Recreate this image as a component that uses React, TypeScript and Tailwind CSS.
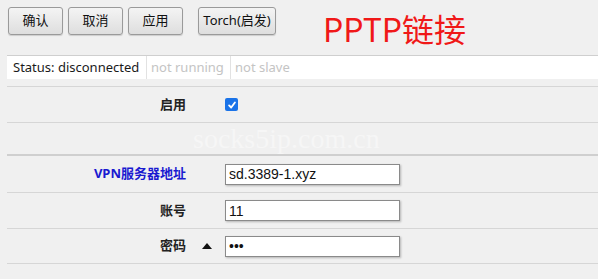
import React from 'react'

const btn =
  'h-[28px] rounded-[3px] border border-[#9a9a9a] bg-gradient-to-b from-[#f4f4f4] to-[#dedede] text-[13px] text-[#111] shadow-[0_1px_1px_rgba(0,0,0,0.15)]'

function Row({
  label,
  blue,
  height,
  children,
  extra,
}: {
  label?: string
  blue?: boolean
  height: string
  children?: React.ReactNode
  extra?: React.ReactNode
}) {
  return (
    <div className={`flex items-center border-b border-[#d6d6d6] ${height}`}>
      <div
        className={`w-[179px] shrink-0 text-right text-[13px] font-bold ${
          blue ? 'text-[#1a1ad0]' : 'text-[#222]'
        }`}
      >
        {label}
      </div>
      <div className="w-[39px] shrink-0 flex items-center justify-center pl-[2px]">{extra}</div>
      {children}
    </div>
  )
}

function Field({ value }: { value: string }) {
  return (
    <div className="w-[175px] h-[21px] border border-[#8a8a8a] bg-white shadow-[1px_1px_2px_rgba(0,0,0,0.25)] flex items-center pl-[3px] text-[14px] text-[#111] font-['Liberation_Sans',Arial,sans-serif] leading-none">
      {value}
    </div>
  )
}

export default function App() {
  return (
    <div className="relative w-[598px] h-[279px] overflow-hidden bg-[#f0f0f0] font-['Noto_Sans','Noto_Sans_CJK_SC',sans-serif]">
      {/* Toolbar */}
      <div className="flex items-start pl-[8px] pt-[7px] h-[55px]">
        <div className="flex gap-[5px]">
          <button className={`${btn} w-[55px]`}>确认</button>
          <button className={`${btn} w-[55px]`}>取消</button>
          <button className={`${btn} w-[55px]`}>应用</button>
        </div>
        <button className={`${btn} w-[78px] ml-[15px]`}>Torch(启发)</button>
        <div className="ml-[47px] mt-[3px] text-[32px] leading-[36px] text-[#f01818] font-['Noto_Sans_CJK_SC',sans-serif]">
          PPTP链接
        </div>
      </div>

      {/* Status tabs */}
      <div className="ml-[7px] flex h-[24px] border-t border-[#cfcfcf] bg-white text-[13px] leading-none">
        <div className="w-[140px] flex items-center pl-[6px] border-r border-[#e2e2e2] text-[#1a1a1a]">
          Status: disconnected
        </div>
        <div className="w-[84px] flex items-center pl-[4px] border-r border-[#e2e2e2] text-[#c4c4c4]">
          not running
        </div>
        <div className="w-[70px] flex items-center pl-[4px] text-[#c4c4c4]">not slave</div>
      </div>

      {/* Form rows */}
      <div className="ml-[7px] mt-[7px] border-t border-[#d6d6d6]">
        <Row label="启用" height="h-[36px]">
          <span className="w-[13px] h-[13px] rounded-[2px] bg-[#1a73e8] flex items-center justify-center">
            <svg width="10" height="10" viewBox="0 0 12 12" fill="none" stroke="white" strokeWidth="2.2" strokeLinecap="round" strokeLinejoin="round">
              <polyline points="2.5 6.5 5 9 9.5 3" />
            </svg>
          </span>
        </Row>
        <div className="h-[33px] border-b-2 border-[#cfcfcf]" />
        <Row label="VPN服务器地址" blue height="h-[37px]">
          <Field value="sd.3389-1.xyz" />
        </Row>
        <Row label="账号" height="h-[36px]">
          <Field value="11" />
        </Row>
        <Row
          label="密码"
          height="h-[35px]"
          extra={
            <svg width="10" height="6" viewBox="0 0 10 6">
              <polygon points="5 0 10 6 0 6" fill="#111" />
            </svg>
          }
        >
          <Field value="•••" />
        </Row>
      </div>

      {/* Watermark */}
      <div className="absolute left-[193px] top-[118px] text-[28px] text-[#f6f6f6] font-['Liberation_Serif',serif] pointer-events-none select-none">
        socks5ip.com.cn
      </div>
    </div>
  )
}
